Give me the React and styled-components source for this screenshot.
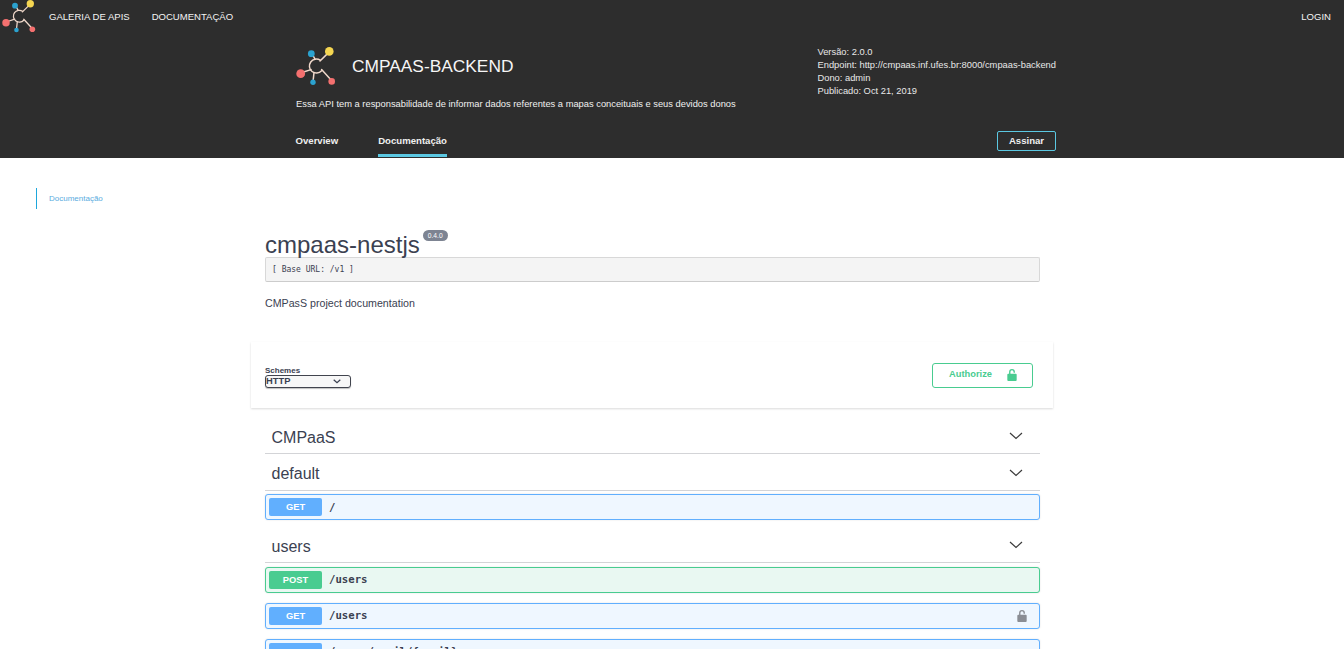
import React from "react";
import styled, { createGlobalStyle } from "styled-components";

const Global = createGlobalStyle`
  html, body { margin: 0; padding: 0; height: 100%; overflow: hidden; background: #fff; }
  body { font-family: "Liberation Sans", Arial, sans-serif; }
  #root { height: 100vh; overflow: hidden; }
`;

const Header = styled.header`
  height: 158px;
  background: #2d2d2d;
  display: flex;
  flex-direction: column;
`;
const TopBar = styled.nav`
  height: 36px;
  display: flex;
  align-items: center;
  padding: 0 13px 0 2px;
`;
const TopLogo = styled.div`
  display: flex;
  align-self: flex-start;
`;
const TopLink = styled.a`
  font-size: 9.55px;
  color: #f4f4f4;
  margin-left: ${(p) => p.$ml || 0}px;
  position: relative;
  top: -2px;
`;
const Spacer = styled.div`
  flex: 1;
`;
const Hero = styled.div`
  width: 760px;
  margin-left: 296px;
  flex: 1;
  display: flex;
  flex-direction: column;
  min-height: 0;
`;
const HeroTop = styled.div`
  display: flex;
  justify-content: space-between;
  height: 85px;
`;
const TitleArea = styled.div`
  display: flex;
  flex-direction: column;
  padding-top: 11px;
`;
const TitleRow = styled.div`
  display: flex;
  align-items: center;
  gap: 16px;
`;
const ApiTitle = styled.h1`
  margin: 0 0 1px;
  font-weight: 400;
  font-size: 17.33px;
  color: #f6f6f6;
`;
const ApiDesc = styled.p`
  margin: 11px 0 0;
  font-size: 9.33px;
  line-height: 12px;
  color: #f0f0f0;
`;
const Meta = styled.div`
  padding-top: 10px;
  font-size: 9.33px;
  line-height: 13px;
  color: #e8e8e8;
`;
const TabBar = styled.div`
  flex: 1;
  display: flex;
  align-items: stretch;
  justify-content: space-between;
`;
const Tabs = styled.div`
  display: flex;
  gap: 40px;
  margin-left: -0.5px;
`;
const Tab = styled.a`
  display: flex;
  align-items: center;
  font-size: 9.6px;
  font-weight: 700;
  color: #f0f0f0;
  height: 34px;
  margin-top: 2px;
  padding-top: 3px;
  box-sizing: border-box;
  border-bottom: 3px solid ${(p) => (p.$active ? "#5bc8e2" : "transparent")};
`;
const Subscribe = styled.button`
  width: 59px;
  height: 20px;
  margin-top: 10px;
  padding: 0 0 2px;
  background: transparent;
  border: 1px solid #5bc8e2;
  border-radius: 2px;
  color: #f0f0f0;
  font: 700 9.6px "Liberation Sans", sans-serif;
`;

const Body = styled.main`
  display: grid;
  grid-template-columns: 251px 802px;
`;
const SideNav = styled.aside`
  padding: 30px 0 0 36px;
`;
const SideLink = styled.a`
  display: flex;
  align-items: center;
  height: 21px;
  padding-left: 12px;
  border-left: 1px solid #1ea7dc;
  font-size: 8px;
  color: #5aace0;
`;
const Swagger = styled.div`
  display: flex;
  flex-direction: column;
`;
const Info = styled.section`
  padding: 71px 13px 0 14px;
  height: 184px;
  box-sizing: border-box;
  color: #3b4151;
`;
const TitleLine = styled.div`
  display: flex;
  align-items: flex-start;
  height: 28px;
`;
const InfoTitle = styled.h2`
  margin: 0;
  font-weight: 400;
  font-size: 24px;
  line-height: 32px;
  color: #3b4151;
`;
const Version = styled.span`
  margin: 1px 0 0 3px;
  height: 11px;
  padding: 0 5px;
  border-radius: 6px;
  background: #7d8492;
  color: #fff;
  font-size: 6.7px;
  line-height: 11px;
`;
const BaseUrl = styled.div`
  height: 25px;
  box-sizing: border-box;
  padding-left: 6px;
  background: #f4f4f4;
  border: 1px solid #d8d8d8;
  border-bottom-color: #ccc;
  border-radius: 2px;
  font: 8px/24px "DejaVu Sans Mono", monospace;
  color: #3b4151;
`;
const InfoDesc = styled.p`
  margin: 14px 0 0;
  font-size: 10.67px;
  line-height: 14px;
  color: #3b4151;
`;
const SchemeBar = styled.section`
  height: 66px;
  box-sizing: border-box;
  display: flex;
  align-items: center;
  justify-content: space-between;
  padding: 0 20px 0 14px;
  background: #fff;
  box-shadow: 0 1px 2px rgba(0, 0, 0, 0.15);
`;
const SchemeGroup = styled.div`
  display: flex;
  flex-direction: column;
  margin-top: 4px;
`;
const SchemeLabel = styled.span`
  font-size: 8px;
  line-height: 8px;
  font-weight: 700;
  color: #3b4151;
`;
const SchemeSelect = styled.div`
  width: 86px;
  height: 13px;
  box-sizing: border-box;
  display: flex;
  align-items: center;
  justify-content: space-between;
  padding: 0 9px 0 0;
  background: #f7f7f7;
  border: 1px solid #41444e;
  border-radius: 3px;
  box-shadow: 0 1px 1px rgba(0, 0, 0, 0.25);
  font-size: 9.33px;
  font-weight: 700;
  color: #3b4151;
`;
const AuthButton = styled.button`
  width: 101px;
  height: 25px;
  margin-top: 1px;
  padding: 0 15px 0 16px;
  display: flex;
  align-items: center;
  justify-content: space-between;
  background: #fff;
  border: 1px solid #49cc90;
  border-radius: 3px;
  color: #49cc90;
  font: 700 9.33px "Liberation Sans", sans-serif;

  svg {
    margin-bottom: 2px;
  }
`;
const AuthText = styled.span`
  margin-bottom: 3px;
`;
const Ops = styled.div`
  padding: 9px 13px 0 14px;
  display: flex;
  flex-direction: column;
`;
const TagHead = styled.div`
  height: 37px;
  box-sizing: border-box;
  margin-top: ${(p) => p.$mt || 0}px;
  padding: 0 17px 0 6.5px;
  display: flex;
  align-items: center;
  justify-content: space-between;
  border-bottom: 1px solid #d3d4d7;
  font-size: 16px;
  color: #3b4151;

  svg {
    margin-top: ${(p) => p.$cmt || 1}px;
  }
`;
const TagName = styled.span`
  padding-top: ${(p) => p.$pt}px;
`;
const Op = styled.div`
  height: 26px;
  flex: none;
  box-sizing: border-box;
  margin-top: ${(p) => p.$mt}px;
  padding: 0 12px 0 3px;
  display: flex;
  align-items: center;
  gap: 7px;
  border: 1px solid ${(p) => p.$color};
  border-radius: 3px;
  background: ${(p) => p.$bg};
  box-shadow: 0 0 2px rgba(0, 0, 0, 0.12);
`;
const Method = styled.span`
  width: 53px;
  height: 18px;
  border-radius: 2px;
  background: ${(p) => p.$color};
  color: #fff;
  text-align: center;
  font-size: 9.33px;
  line-height: 18px;
  font-weight: 700;
`;
const Path = styled.span`
  flex: 1;
  font: 700 10.67px "DejaVu Sans Mono", monospace;
  color: #3b4151;
`;
const Clip = styled.div`
  height: 491px;
  overflow: hidden;
`;

const Logo = ({ size = 40 }) => (
  <svg width={size} height={size} viewBox="0 0 40 40" fill="none">
    <g stroke="#f0d8ca" strokeWidth="1.5" strokeLinecap="round">
      <path d="M24.2 13.2A7 7 0 1 0 25.6 23.8" />
      <path d="M24 14 31.5 6.6" />
      <path d="M17 8.5 19 12.2" />
      <path d="M7.5 25 15 22.6" />
      <path d="M17.2 33 18 25.6" />
      <path d="M25.6 22.6 34.2 32" />
    </g>
    <circle cx="33.3" cy="4.4" r="4.3" fill="#f5d651" />
    <circle cx="15.3" cy="6.7" r="3.4" fill="#2ba2cf" />
    <circle cx="4.7" cy="26.7" r="4.4" fill="#f4706f" />
    <circle cx="17" cy="35.3" r="2.7" fill="#2ba2cf" />
    <circle cx="35.7" cy="34.4" r="3.3" fill="#f4706f" />
  </svg>
);

const Chevron = () => (
  <svg width="14" height="8" viewBox="0 0 14 8" fill="none">
    <path d="M1 1l6 5.5L13 1" stroke="#3b3b3b" strokeWidth="1.2" />
  </svg>
);

const Lock = ({ color }) => (
  <svg width="10" height="12" viewBox="2.2 1.2 9.6 12.3">
    <path d="M4 6.5V4.2a3 3 0 0 1 6 0v.8H8.6v-.8a1.6 1.6 0 0 0-3.2 0v2.3z" fill={color} />
    <rect x="2.2" y="6" width="9.6" height="7.5" rx="1" fill={color} />
  </svg>
);

const SmallChevron = () => (
  <svg width="8" height="5" viewBox="0 0 8 5" fill="none">
    <path d="M.7.7 4 3.8 7.3.7" stroke="#3b4151" strokeWidth="1.2" />
  </svg>
);

const GET = { c: "#61affe", bg: "#eff7ff" };
const POST = { c: "#49cc90", bg: "#e9f8f2" };

export default function App() {
  return (
    <>
      <Global />
      <Header>
        <TopBar>
          <TopLogo><Logo size={34} /></TopLogo>
          <TopLink $ml={13}>GALERIA DE APIS</TopLink>
          <TopLink $ml={22}>DOCUMENTAÇÃO</TopLink>
          <Spacer />
          <TopLink>LOGIN</TopLink>
        </TopBar>
        <Hero>
          <HeroTop>
            <TitleArea>
              <TitleRow>
                <Logo />
                <ApiTitle>CMPAAS-BACKEND</ApiTitle>
              </TitleRow>
              <ApiDesc>Essa API tem a responsabilidade de informar dados referentes a mapas conceituais e seus devidos donos</ApiDesc>
            </TitleArea>
            <Meta>
              <div>Versão: 2.0.0</div>
              <div>Endpoint: http://cmpaas.inf.ufes.br:8000/cmpaas-backend</div>
              <div>Dono: admin</div>
              <div>Publicado: Oct 21, 2019</div>
            </Meta>
          </HeroTop>
          <TabBar>
            <Tabs>
              <Tab>Overview</Tab>
              <Tab $active>Documentação</Tab>
            </Tabs>
            <Subscribe>Assinar</Subscribe>
          </TabBar>
        </Hero>
      </Header>
      <Clip>
        <Body>
          <SideNav>
            <SideLink>Documentação</SideLink>
          </SideNav>
          <Swagger>
            <Info>
              <TitleLine>
                <InfoTitle>cmpaas-nestjs</InfoTitle>
                <Version>0.4.0</Version>
              </TitleLine>
              <BaseUrl>[ Base URL: /v1 ]</BaseUrl>
              <InfoDesc>CMPasS project documentation</InfoDesc>
            </Info>
            <SchemeBar>
              <SchemeGroup>
                <SchemeLabel>Schemes</SchemeLabel>
                <SchemeSelect>
                  HTTP
                  <SmallChevron />
                </SchemeSelect>
              </SchemeGroup>
              <AuthButton>
                <AuthText>Authorize</AuthText>
                <Lock color="#49cc90" />
              </AuthButton>
            </SchemeBar>
            <Ops>
              <TagHead><TagName $pt={5}>CMPaaS</TagName><Chevron /></TagHead>
              <TagHead><TagName $pt={3}>default</TagName><Chevron /></TagHead>
              <Op $color={GET.c} $bg={GET.bg} $mt={3}>
                <Method $color={GET.c}>GET</Method>
                <Path>/</Path>
              </Op>
              <TagHead $mt={6} $cmt={1}><TagName $pt={6}>users</TagName><Chevron /></TagHead>
              <Op $color={POST.c} $bg={POST.bg} $mt={3.6}>
                <Method $color={POST.c}>POST</Method>
                <Path>/users</Path>
              </Op>
              <Op $color={GET.c} $bg={GET.bg} $mt={10}>
                <Method $color={GET.c}>GET</Method>
                <Path>/users</Path>
                <Lock color="#8a8d94" />
              </Op>
              <Op $color={GET.c} $bg={GET.bg} $mt={10}>
                <Method $color={GET.c}>GET</Method>
                <Path>/users/email/{"{email}"}</Path>
              </Op>
            </Ops>
          </Swagger>
        </Body>
      </Clip>
    </>
  );
}
